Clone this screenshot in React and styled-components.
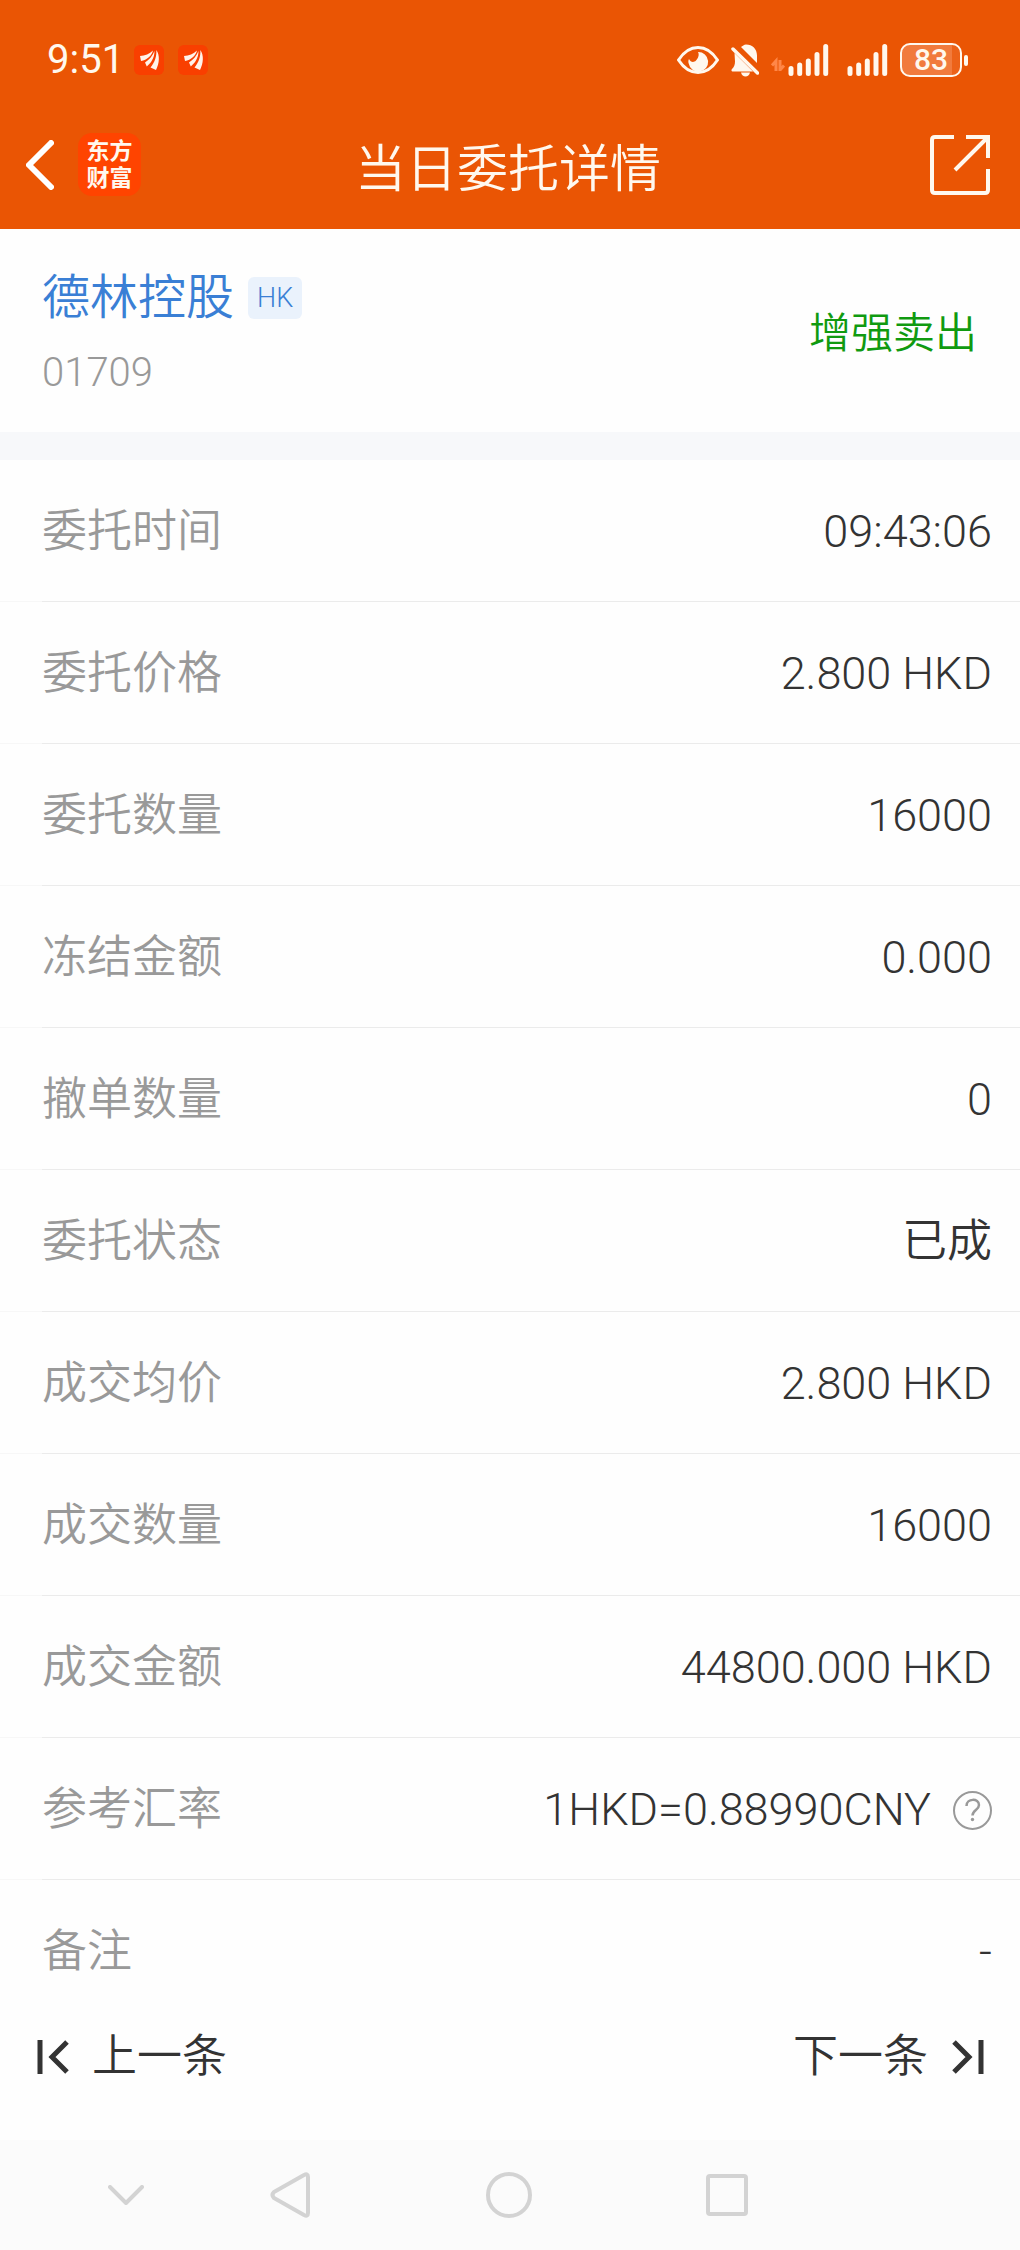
import styled, { createGlobalStyle } from "styled-components";

const GlobalStyle = createGlobalStyle`
  *, *::before, *::after {
    box-sizing: border-box;
    margin: 0;
    padding: 0;
  }

  body {
    background: #fefefe;
    color: #333;
    font-family: Roboto, "Noto Sans CJK SC", sans-serif;
    font-weight: 350;
  }

  button {
    border: none;
    background: none;
    color: inherit;
    font: inherit;
    cursor: pointer;
  }

  svg {
    display: block;
    flex: none;
  }
`;

const Page = styled.div`
  min-height: 100vh;
  display: flex;
  flex-direction: column;
`;

const TopArea = styled.div`
  background: #ea5504;
  color: #fff8ee;
`;

const StatusBar = styled.div`
  height: 100px;
  padding: 20px 52px 0 47px;
  display: flex;
  align-items: center;
  justify-content: space-between;
`;

const StatusGroup = styled.div`
  display: flex;
  align-items: center;
  gap: ${(props) => props.$gap}px;
`;

const Clock = styled.span`
  font-size: 40px;
  font-weight: 400;
  line-height: 40px;
`;

const Battery = styled.div`
  display: flex;
  align-items: center;
  gap: 2px;

  &::after {
    content: "";
    width: 4px;
    height: 11px;
    border-radius: 2px;
    background: #fff8ee;
  }
`;

const BatteryLevel = styled.span`
  width: 62px;
  height: 34px;
  border: 2px solid #fff8ee;
  border-radius: 10px;
  background: linear-gradient(to right, #f17b3d 86%, #ec6218 86%);
  font-size: 30px;
  font-weight: 500;
  line-height: 30px;
  text-align: center;
`;

const Header = styled.header`
  height: 129px;
  padding: 0 30px 0 26px;
  display: grid;
  grid-template-columns: 1fr auto 1fr;
  align-items: center;
`;

const HeaderLeft = styled.div`
  display: flex;
  align-items: center;
  gap: 24px;
`;

const ShareButton = styled.button`
  justify-self: end;
`;

const Logo = styled.div`
  width: 63px;
  height: 63px;
  border-radius: 14px;
  background: #ff4400;
  display: flex;
  flex-direction: column;
  align-items: center;
  justify-content: center;
  font-size: 23px;
  font-weight: 700;
  line-height: 27px;
`;

const Title = styled.h1`
  font-family: "Noto Sans CJK SC", sans-serif;
  font-size: 51px;
  font-weight: 350;
  line-height: 60px;
`;

const Stock = styled.section`
  height: 203px;
  padding: 6px 43px 0 42px;
  display: flex;
  align-items: center;
  justify-content: space-between;
`;

const StockName = styled.div`
  display: flex;
  align-items: center;
  gap: 14px;
  color: #3a7fd5;
  font-size: 48px;
  line-height: 60px;
`;

const Market = styled.span`
  padding: 0 9px;
  border-radius: 6px;
  background: #eaf2fc;
  font-size: 27px;
  line-height: 42px;
`;

const Code = styled.div`
  margin-top: 18px;
  color: #999;
  font-size: 40px;
  line-height: 54px;
`;

const Side = styled.div`
  color: #109a10;
  font-size: 42px;
  line-height: 60px;
`;

const Band = styled.div`
  height: 28px;
  background: #f7f8fa;
`;

const Row = styled.div`
  height: 142px;
  padding: 2px 28px 0 42px;
  display: flex;
  align-items: center;
  justify-content: space-between;
  background: linear-gradient(to right, #f7f7f7 42px, #ebebeb 42px) bottom / 100% 1px no-repeat;
  font-size: 45px;
  line-height: 60px;

  &:last-child {
    background: none;
  }
`;

const Label = styled.dt`
  color: #999;
`;

const Value = styled.dd`
  display: flex;
  align-items: center;
  gap: 22px;
`;

const Pager = styled.nav`
  padding: 0 34px 48px;
  display: flex;
  justify-content: space-between;
`;

const PagerButton = styled.button`
  display: flex;
  align-items: center;
  gap: 22px;
  font-size: 45px;
  line-height: 70px;
`;

const SystemBar = styled.footer`
  height: 110px;
  margin-top: auto;
  padding: 0 18% 0 7%;
  display: grid;
  grid-template-columns: 1fr 2fr 2fr 2fr;
  align-items: center;
  justify-items: center;
  background: #fbfbfb;
  color: #d3d3d3;
`;

const details = [
  { label: "委托时间", value: "09:43:06" },
  { label: "委托价格", value: "2.800 HKD" },
  { label: "委托数量", value: "16000" },
  { label: "冻结金额", value: "0.000" },
  { label: "撤单数量", value: "0" },
  { label: "委托状态", value: "已成" },
  { label: "成交均价", value: "2.800 HKD" },
  { label: "成交数量", value: "16000" },
  { label: "成交金额", value: "44800.000 HKD" },
  { label: "参考汇率", value: "1HKD=0.88990CNY", help: true },
  { label: "备注", value: "-" },
];

function AppBadge() {
  return (
    <svg width="30" height="30" viewBox="0 0 30 30">
      <rect width="30" height="30" rx="6" fill="#f93f00" />
      <g fill="#fff3ea">
        <path d="M6 11C11 10.500 15.500 9 19 5.500C18 10.500 13 15 7 16z" />
        <path d="M20.500 6C20.500 13 17 18 12.800 21.500L11 17.500C15 15 18.500 11 20.500 6z" />
        <path d="M22.300 5C26 10 25.500 18 22 25L16.500 22.500C21 17 22.800 11 22.300 5z" />
      </g>
    </svg>
  );
}

function EyeIcon() {
  return (
    <svg width="42" height="28" viewBox="0 0 42 28">
      <path
        d="M1.500 14C7 5.500 13.500 1.500 21 1.500S35 5.500 40.500 14C35 22.500 28.500 26.500 21 26.500S7 22.500 1.500 14z"
        fill="none"
        stroke="currentColor"
        strokeWidth="3"
        strokeLinejoin="round"
      />
      <path
        d="M21 6a9.800 9.800 0 1 1-9.300 11.500c-.6-2-.4-3 .3-4.500c1.500 3 4.500 4 7 1.500c2.300-2.300 3.500-6 2-8.500z"
        fill="currentColor"
      />
    </svg>
  );
}

function MutedBellIcon() {
  return (
    <svg width="28" height="33" viewBox="0 0 28 33" fill="currentColor">
      <path d="M10 3C11.500 2 13 .5 15 .5c6.500 0 11 4.500 11 11v7.500z" />
      <path d="M3.500 9L22 27.500H1.500C.5 27.500 0 26 1 25c2-2 3-4 3-7.500z" />
      <path d="M10 28.500h9c-.5 2.500-2.500 4-4.500 4s-4-1.500-4.500-4z" />
      <path d="M2 5l24.500 24" stroke="currentColor" strokeWidth="3.500" strokeLinecap="round" />
    </svg>
  );
}

function DataArrowsIcon() {
  return (
    <svg width="14" height="22" viewBox="0 -11 14 22" fill="none" stroke="#ff8748" strokeWidth="3">
      <path d="M5 11V1L1 5.500" />
      <path d="M9 0v10l4-4.500" />
    </svg>
  );
}

function SignalIcon() {
  return (
    <svg
      width="41"
      height="32"
      viewBox="0 0 41 32"
      stroke="currentColor"
      strokeWidth="5"
      strokeLinecap="round"
    >
      <path d="M3 24.500v5M11.700 21v8.500M20.300 17v12.500M29 10.500v19M37.700 2.500v27" />
    </svg>
  );
}

function BackIcon() {
  return (
    <svg
      width="28"
      height="50"
      viewBox="0 0 28 50"
      fill="none"
      stroke="#fff"
      strokeWidth="6"
      strokeLinecap="round"
      strokeLinejoin="round"
    >
      <path d="M25 3L3 25l22 22" />
    </svg>
  );
}

function ShareIcon() {
  return (
    <svg
      width="60"
      height="60"
      viewBox="0 0 60 60"
      fill="none"
      stroke="currentColor"
      strokeWidth="4"
    >
      <path d="M24 2H5Q2 2 2 5v50q0 3 3 3h50q3 0 3-3V34" />
      <path d="M36 2h22v21M57 3L25 35" />
    </svg>
  );
}

function HelpIcon() {
  return (
    <svg width="39" height="39" viewBox="0 0 39 39" fill="none" stroke="#999" strokeWidth="2">
      <circle cx="19.500" cy="19.500" r="18.500" />
      <path d="M13.500 15c0-8 12.500-8 12.500-1 0 5-6.500 5-6.500 10.500" strokeWidth="2.500" />
      <circle cx="19.500" cy="28.500" r="1.700" fill="#999" stroke="none" />
    </svg>
  );
}

function PrevIcon() {
  return (
    <svg
      width="36"
      height="34"
      viewBox="0 0 36 34"
      fill="none"
      stroke="currentColor"
      strokeWidth="5"
    >
      <path d="M6 0v34M33 2L18 17l15 15" />
    </svg>
  );
}

function NextIcon() {
  return (
    <svg
      width="36"
      height="34"
      viewBox="0 0 36 34"
      fill="none"
      stroke="currentColor"
      strokeWidth="5"
    >
      <path d="M31 0v34M4 2l15 15L4 32" />
    </svg>
  );
}

function SystemIcon({ width, height, children }) {
  return (
    <svg
      width={width}
      height={height}
      viewBox={`0 0 ${width} ${height}`}
      fill="none"
      stroke="currentColor"
      strokeWidth="4"
      strokeLinecap="round"
      strokeLinejoin="round"
    >
      {children}
    </svg>
  );
}

function App() {
  return (
    <>
      <GlobalStyle />
      <Page>
        <TopArea>
          <StatusBar>
            <StatusGroup $gap={10}>
              <Clock>9:51</Clock>
              <StatusGroup $gap={14}>
                <AppBadge />
                <AppBadge />
              </StatusGroup>
            </StatusGroup>
            <StatusGroup $gap={12}>
              <EyeIcon />
              <MutedBellIcon />
              <StatusGroup $gap={18}>
                <StatusGroup $gap={3}>
                  <DataArrowsIcon />
                  <SignalIcon />
                </StatusGroup>
                <SignalIcon />
              </StatusGroup>
              <Battery>
                <BatteryLevel>83</BatteryLevel>
              </Battery>
            </StatusGroup>
          </StatusBar>
          <Header>
            <HeaderLeft>
              <button aria-label="返回">
                <BackIcon />
              </button>
              <Logo>
                <span>东方</span>
                <span>财富</span>
              </Logo>
            </HeaderLeft>
            <Title>当日委托详情</Title>
            <ShareButton aria-label="分享">
              <ShareIcon />
            </ShareButton>
          </Header>
        </TopArea>

        <Stock>
          <div>
            <StockName>
              德林控股 <Market>HK</Market>
            </StockName>
            <Code>01709</Code>
          </div>
          <Side>增强卖出</Side>
        </Stock>
        <Band />

        <dl>
          {details.map(({ label, value, help }) => (
            <Row key={label}>
              <Label>{label}</Label>
              <Value>
                {value}
                {help && (
                  <button aria-label="汇率说明">
                    <HelpIcon />
                  </button>
                )}
              </Value>
            </Row>
          ))}
        </dl>

        <Pager>
          <PagerButton>
            <PrevIcon />
            上一条
          </PagerButton>
          <PagerButton>
            下一条
            <NextIcon />
          </PagerButton>
        </Pager>

        <SystemBar>
          <button aria-label="收起">
            <SystemIcon width={36} height={20}>
              <path d="M2 2l16 16L34 2" />
            </SystemIcon>
          </button>
          <button aria-label="后退">
            <SystemIcon width={40} height={46}>
              <path d="M34 3L4 20q-3 3 0 6l30 17q4 2 4-2V5q0-4-4-2z" />
            </SystemIcon>
          </button>
          <button aria-label="主屏幕">
            <SystemIcon width={46} height={46}>
              <circle cx="23" cy="23" r="21" />
            </SystemIcon>
          </button>
          <button aria-label="最近任务">
            <SystemIcon width={42} height={42}>
              <rect x="2" y="2" width="38" height="38" rx="2" />
            </SystemIcon>
          </button>
        </SystemBar>
      </Page>
    </>
  );
}

export default App;
